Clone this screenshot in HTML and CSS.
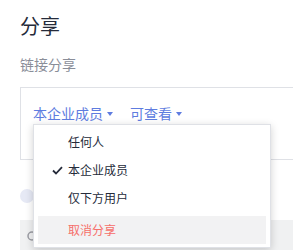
FILE: index.html
```html
<!DOCTYPE html>
<html lang="zh">
<head>
<meta charset="utf-8">
<link rel="stylesheet" href="styles.css">
</head>
<body>
<div class="page">
  <h2 class="title">分享</h2>
  <div class="subtitle">链接分享</div>
  <div class="card">
    <div class="controls">
      <span class="trigger">本企业成员<i class="caret"></i></span>
      <span class="trigger">可查看<i class="caret"></i></span>
    </div>
    <div class="menu">
      <div class="item">任何人</div>
      <div class="item">
        <svg class="check" width="11" height="9" viewBox="0 0 11 9"><path d="M1 4.5 L4 7.5 L10 1.2" fill="none" stroke="#252b3a" stroke-width="1.8"/></svg>本企业成员
      </div>
      <div class="item">仅下方用户</div>
      <div class="item danger">取消分享</div>
    </div>
  </div>
  <div class="radio-row"><span class="radio"></span></div>
  <div class="bottom-bar">
    <svg class="search" width="12" height="12" viewBox="0 0 12 12"><circle cx="5" cy="5" r="4" fill="none" stroke="#9a9ca3" stroke-width="1.5"/></svg>
  </div>
</div>
</body>
</html>
```

FILE: styles.css
```css
html, body {
  margin: 0;
  padding: 0;
  overflow: hidden;
  background: #ffffff;
}
body {
  font-family: "Noto Sans CJK SC", "Noto Sans", sans-serif;
  color: #252b3a;
}
.page {
  padding: 12px 0 0 20px;
  width: 420px;
}
.title {
  margin: 0;
  font-size: 20px;
  font-weight: normal;
  line-height: 28px;
  color: #252b3a;
}
.subtitle {
  margin-top: 14px;
  font-size: 14px;
  line-height: 20px;
  color: #8a8e99;
}
.card {
  position: relative;
  margin-top: 13px;
  border: 1px solid #dfe1e6;
  padding: 15px 12px 36px;
}
.controls {
  display: flex;
  gap: 17px;
  height: 20px;
  line-height: 20px;
  font-size: 14px;
}
.trigger {
  color: #5e7ce0;
  display: inline-flex;
  align-items: center;
}
.caret {
  display: inline-block;
  margin-left: 4px;
  margin-top: 2px;
  width: 0;
  height: 0;
  border-left: 3px solid transparent;
  border-right: 3px solid transparent;
  border-top: 4px solid #5e7ce0;
}
.menu {
  position: absolute;
  left: 12px;
  top: 36px;
  width: 228px;
  background: #fff;
  border: 1px solid #dfe1e6;
  box-shadow: 0 2px 8px rgba(0, 0, 0, 0.18);
  padding: 3px 4px;
  z-index: 5;
}
.item {
  position: relative;
  height: 28px;
  line-height: 28px;
  padding-left: 30px;
  font-size: 12px;
  color: #252b3a;
}
.item.danger {
  margin-top: 4px;
  background: #f2f2f3;
  color: #f66f6a;
}
.check {
  position: absolute;
  left: 14px;
  top: 10px;
}
.radio-row {
  height: 60px;
  padding-top: 29px;
  box-sizing: border-box;
}
.radio {
  display: block;
  width: 14px;
  height: 14px;
  border-radius: 50%;
  background: #e6e9f5;
}
.bottom-bar {
  height: 40px;
  background: #f0f1f2;
  padding: 11px 0 0 7px;
  box-sizing: border-box;
}
.search {
  display: block;
}
```
